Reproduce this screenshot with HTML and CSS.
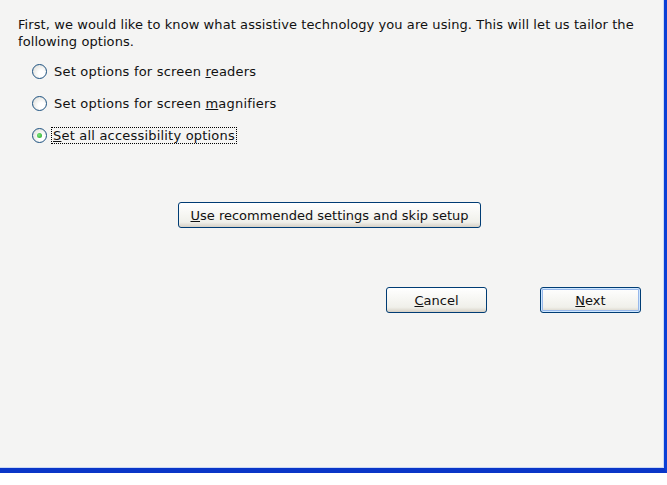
FILE: index.html
```html
<!DOCTYPE html>
<html>
<head>
<meta charset="utf-8">
<link rel="stylesheet" href="styles.css">
</head>
<body>
<div class="frame">
  <div class="dialog">
    <p class="intro">First, we would like to know what assistive technology you are using. This will let us tailor the following options.</p>
    <div class="options">
      <label class="opt"><span class="radio"></span><span>Set options for screen <u>r</u>eaders</span></label>
      <label class="opt"><span class="radio"></span><span>Set options for screen <u>m</u>agnifiers</span></label>
      <label class="opt"><span class="radio checked"></span><span class="focus"><u>S</u>et all accessibility options</span></label>
    </div>
    <div class="skip-row">
      <button class="btn wide"><u>U</u>se recommended settings and skip setup</button>
    </div>
    <div class="nav-row">
      <button class="btn"><u>C</u>ancel</button>
      <button class="btn default"><u>N</u>ext</button>
    </div>
  </div>
</div>
</body>
</html>
```
FILE: styles.css
```css
html, body {
  margin: 0;
  padding: 0;
  background: #ffffff;
}
body {
  font-family: Tahoma, "DejaVu Sans", "Liberation Sans", sans-serif;
  font-size: 13px;
  color: #111;
}
.frame {
  width: 667px;
  height: 473px;
  box-sizing: border-box;
  border-right: 3px solid #0a3fd6;
  border-bottom: 5px solid #0a36c8;
  background: #f4f4f3;
  box-shadow: inset -1px -1px 0 #c9d8f4;
}
.dialog {
  display: flex;
  flex-direction: column;
  padding: 16px 0 0 18px;
}
.intro {
  margin: 0;
  width: 630px;
  line-height: 17px;
  letter-spacing: 0.08px;
}
.options {
  display: flex;
  flex-direction: column;
  gap: 15px;
  margin: 13px 0 0 14px;
}
.opt {
  display: flex;
  align-items: center;
  gap: 7px;
  height: 17px;
  letter-spacing: 0.2px;
}
.radio {
  width: 13px;
  height: 13px;
  border-radius: 50%;
  border: 1px solid #1c5180;
  background: radial-gradient(circle at 65% 65%, #ffffff 25%, #d8d8d2 100%);
  position: relative;
  flex: none;
}
.radio.checked::after {
  content: "";
  position: absolute;
  left: 4px;
  top: 4px;
  width: 5px;
  height: 5px;
  border-radius: 50%;
  background: radial-gradient(circle at 40% 40%, #7de87d, #21a121);
}
.focus {
  outline: 1px dotted #000;
  outline-offset: 0;
  padding: 0 1px;
  margin-left: -2px;
}
.skip-row {
  margin: 58px 0 0 160px;
}
.nav-row {
  display: flex;
  gap: 53px;
  margin: 59px 0 0 368px;
}
.btn {
  font-family: inherit;
  font-size: inherit;
  color: #111;
  height: 26px;
  width: 101px;
  border: 1px solid #003c74;
  border-radius: 3px;
  background: linear-gradient(#ffffff, #f0f0ea 80%, #d6d0c5);
  padding: 0;
}
.btn.wide {
  width: 303px;
}
.btn.default {
  box-shadow: inset 0 0 0 1px #cee7ff, inset 0 0 0 2px #98b8ea;
}
```
